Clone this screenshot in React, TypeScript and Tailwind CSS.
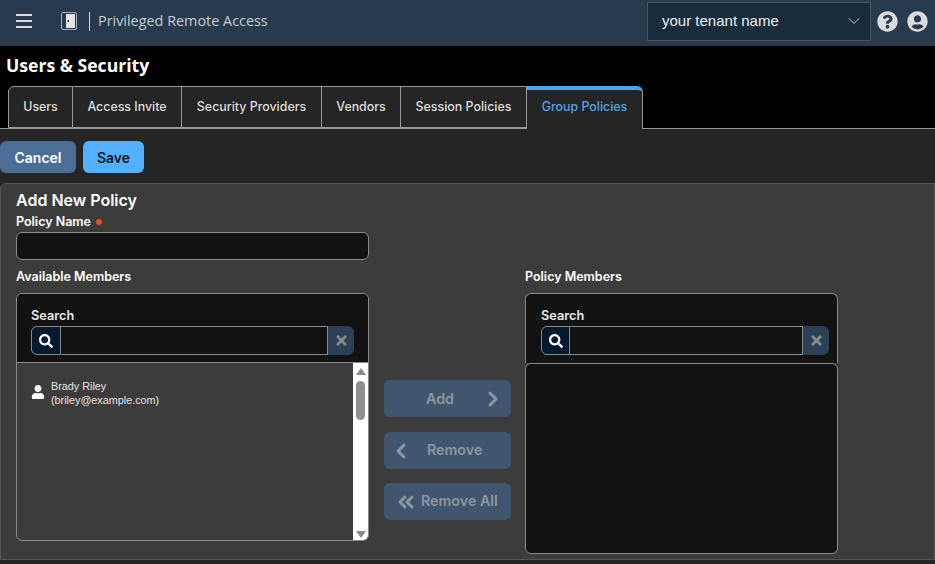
import { ChevronLeft, ChevronRight, ChevronDown, ChevronsLeft } from 'lucide-react'
import { FaSearch, FaTimes, FaQuestionCircle, FaUserCircle, FaUser } from 'react-icons/fa'

const tabs = [
  { label: 'Users', width: 'w-[65px] rounded-tl-[6px] border-l' },
  { label: 'Access Invite', width: 'w-[109px]' },
  { label: 'Security Providers', width: 'w-[140px]' },
  { label: 'Vendors', width: 'w-[79px]' },
  { label: 'Session Policies', width: 'w-[126px]' },
]

function SearchBox({ addon = 'w-[30px]' }: { addon?: string }) {
  return (
    <div className="h-[68px] pt-[14px] pr-[14px]">
      <div className="text-[12.75px] leading-[16px] font-semibold text-[#e8e8e8]">Search</div>
      <div className="mt-[2px] flex h-[29px]">
        <div className={`flex items-center justify-center rounded-l-[6px] border border-[#8a8a8a] bg-[#051a2e] text-white ${addon}`}>
          <FaSearch size={14} />
        </div>
        <div className="flex-1 border-y border-r border-[#8a8a8a] bg-[#121212]" />
        <div className="flex w-[26px] items-center justify-center rounded-r-[6px] bg-[#2c4158] text-[#8a8a8a]">
          <FaTimes size={15} />
        </div>
      </div>
    </div>
  )
}

function MoveButton({ children, className }: { children: React.ReactNode; className?: string }) {
  return (
    <button className={`relative flex h-[37px] w-[127px] items-center rounded-[6px] bg-[#3f566e] text-[14.25px] font-semibold text-[#8e969e] ${className ?? ''}`}>
      {children}
    </button>
  )
}

export default function App() {
  return (
    <div className="flex h-[564px] w-[935px] flex-col overflow-hidden bg-black font-['Inter',sans-serif]">
      <header className="flex h-[46px] shrink-0 items-center bg-[#283a4d] pb-[4px]">
        <div className="ml-[16px] flex w-[16px] flex-col gap-[4px]">
          <span className="h-[2px] bg-[#dcdcdc]" />
          <span className="h-[2px] bg-[#dcdcdc]" />
          <span className="h-[2px] bg-[#dcdcdc]" />
        </div>
        <svg className="ml-[29px]" width="16" height="18" viewBox="0 0 16 18" fill="none">
          <rect x="0.5" y="0.5" width="15" height="17" rx="1.5" fill="#283a4d" stroke="#a9b0b7" />
          <rect x="5" y="2" width="9" height="14" fill="#e4e4e4" />
          <rect x="6.5" y="8" width="1.5" height="2" fill="#283a4d" />
        </svg>
        <span className="ml-[12px] h-[19px] w-px bg-[#dcdcdc]" />
        <span className="ml-[8px] font-['Open_Sans',sans-serif] text-[14.4px] text-[#c5ccd3]">Privileged Remote Access</span>
        <div className="ml-auto flex h-[39px] w-[224px] items-center justify-between border border-[#43566a] bg-[#192c3e] pl-[14px] pr-[6px] font-['Liberation_Sans',sans-serif] text-[15px] text-[#eeeeee]">
          your tenant name
          <ChevronDown size={20} strokeWidth={1} className="text-[#dcdcdc]" />
        </div>
        <FaQuestionCircle size={21} className="ml-[6px] text-[#dcdcdc]" />
        <FaUserCircle size={21} className="ml-[9px] mr-[7px] text-[#dcdcdc]" />
      </header>

      <div className="flex h-[40px] shrink-0 items-center pb-[2px] pl-[6px] font-['Open_Sans',sans-serif] text-[17.6px] font-bold text-white">
        Users &amp; Security
      </div>

      <nav className="flex h-[43px] shrink-0 border-b border-[#9a9a9a] pl-[8px]">
        {tabs.map((t) => (
          <div
            key={t.label}
            className={`flex h-[42px] items-center justify-center border-y border-r border-[#9a9a9a] bg-[#252525] text-[12.4px] font-medium text-[#dedede] ${t.width}`}
          >
            {t.label}
          </div>
        ))}
        <div className="relative z-10 flex h-[43px] w-[116px] items-center justify-center rounded-tr-[6px] border-t-[4px] border-r border-t-[#4ea4ea] border-r-[#9a9a9a] bg-[#252525] pb-[5px] text-[12.4px] font-medium text-[#4ea4ea]">
          Group Policies
        </div>
      </nav>

      <main className="flex flex-1 flex-col bg-[#252525]">
        <div className="flex h-[54px] shrink-0 gap-[7px] pt-[12px]">
          <button className="h-[32px] w-[76px] rounded-[6px] bg-[#4a6e96] text-[14px] font-semibold text-white">Cancel</button>
          <button className="h-[32px] w-[61px] rounded-[6px] bg-[#52b0ff] text-[14px] font-semibold text-[#101820]">Save</button>
        </div>

        <section className="h-[377px] rounded-tl-[6px] border border-[#555555] bg-[#3c3c3c] pl-[15px]">
          <h2 className="mt-[6px] text-[16px] leading-[20px] font-semibold text-white">Add New Policy</h2>
          <div className="mt-[2px] flex items-center text-[12.5px] leading-[20px] font-semibold text-white">
            Policy Name
            <span className="ml-[5px] h-[6px] w-[6px] rounded-full bg-[#f04e12]" />
          </div>
          <div className="h-[28px] w-[353px] rounded-[6px] border border-[#8a8a8a] bg-[#121212]" />
          <div className="mt-[9px] flex">
            <div className="w-[353px]">
              <div className="h-[23px] text-[12.5px] leading-[16px] font-semibold text-white">Available Members</div>
              <div className="mt-[1px] h-[248px] overflow-hidden rounded-[6px] border border-[#8a8a8a]">
                <div className="border-b border-[#8a8a8a] bg-[#121212] pl-[14px]">
                  <SearchBox />
                </div>
                <div className="flex h-[179px]">
                  <div className="flex flex-1 items-start gap-[6px] pl-[14px] pt-[16px] font-['Liberation_Sans',sans-serif] text-[10.8px] leading-[14px] text-[#e4e4e4]">
                    <FaUser size={14} className="mt-[6px] text-white" />
                    <div>
                      Brady Riley
                      <br />
                      (briley@example.com)
                    </div>
                  </div>
                  <div className="relative w-[15px] bg-white">
                    <span className="absolute left-[3px] top-[5px] h-0 w-0 border-x-[5px] border-b-[7px] border-x-transparent border-b-[#8a8a8a]" />
                    <span className="absolute left-[3px] top-[18px] h-[39px] w-[9px] rounded-full bg-[#8f8f8f]" />
                    <span className="absolute bottom-[4px] left-[3px] h-0 w-0 border-x-[5px] border-t-[7px] border-x-transparent border-t-[#8a8a8a]" />
                  </div>
                </div>
              </div>
            </div>

            <div className="ml-[15px] flex w-[127px] flex-col gap-[14px] pt-[111px]">
              <MoveButton>
                <span className="ml-[42px]">Add</span>
                <ChevronRight size={24} strokeWidth={3} className="absolute right-[6px]" />
              </MoveButton>
              <MoveButton className="mt-[1px]">
                <ChevronLeft size={24} strokeWidth={3} className="absolute left-[5px]" />
                <span className="ml-[43px] pb-[2px]">Remove</span>
              </MoveButton>
              <MoveButton>
                <ChevronsLeft size={24} strokeWidth={3} className="absolute left-[10px]" />
                <span className="ml-[37px] pb-[2px]">Remove All</span>
              </MoveButton>
            </div>

            <div className="ml-[14px] w-[313px]">
              <div className="h-[23px] text-[12.5px] leading-[16px] font-semibold text-white">Policy Members</div>
              <div className="mt-[1px] h-[70px] rounded-t-[6px] border-x border-t border-[#8a8a8a] bg-[#121212] pl-[15px]">
                <div className="-mr-[6px]">
                  <SearchBox addon="w-[29px]" />
                </div>
              </div>
              <div className="h-[191px] rounded-[6px] border border-[#8a8a8a] bg-[#121212]" />
            </div>
          </div>
        </section>
      </main>
    </div>
  )
}
